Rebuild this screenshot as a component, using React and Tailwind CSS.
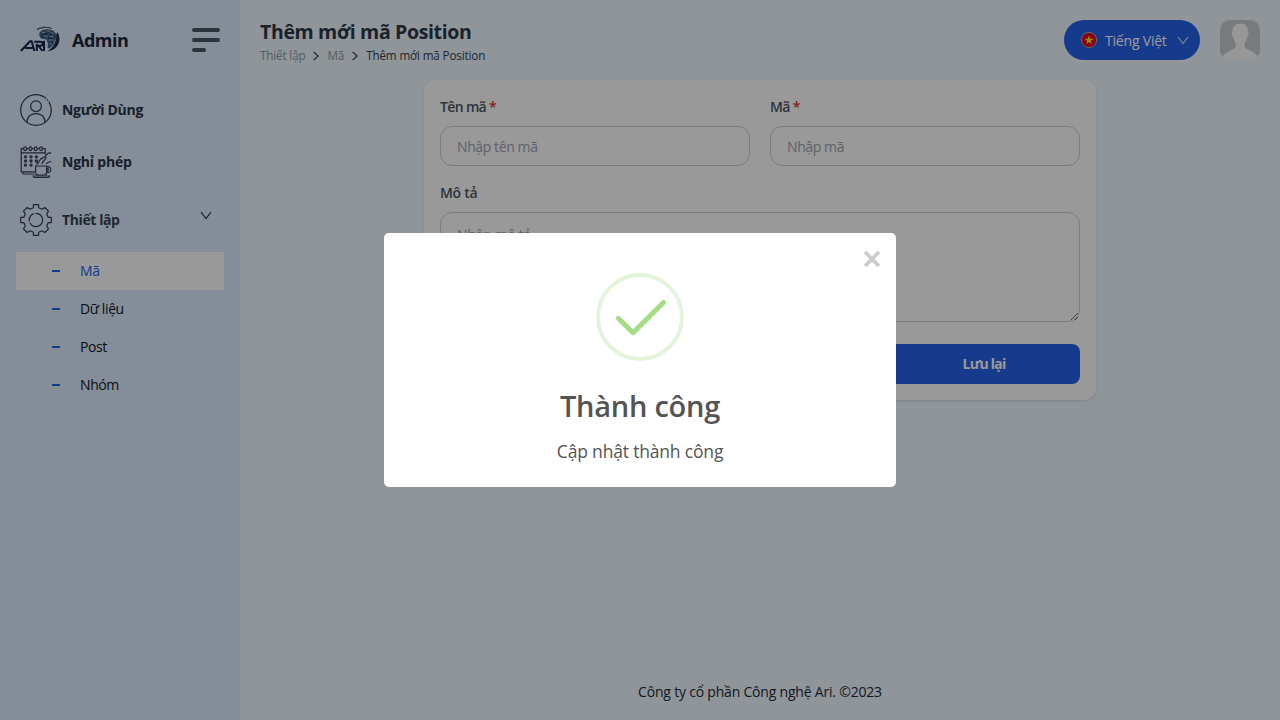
function Logo() {
  return (
    <svg width="40" height="28" viewBox="0 0 40 28" fill="none" className="shrink-0">
      <path d="M17 3.5C20.5 1.2 27 .4 31.5 2.6" stroke="#3a5072" strokeWidth="1.1" />
      <path d="M37.5 6C41.6 13 39.5 23.5 27.5 25.6C33.5 21.5 36.5 16 35.6 10Z" fill="#1b2b52" />
      <path d="M19.6 6.2L23 3.8L28 3L33 4.4L36.4 8L36.8 11.4L34.4 15L33.6 18.6L29.6 22.6L27.6 22L28 17.4L26.4 13.4L21 12.6L19.2 9.6Z" fill="#47627f" />
      <path d="M22 6.5h3M27 5h3M31.5 7h2M24 10h4M30 10.5h3M29 14h4M29.5 18h2" stroke="#7fc0cf" strokeWidth="1.2" />
      <path d="M23 8.2h5M28 12.2h4M21.5 11h2M31 16h2M30 8.5h2" stroke="#1d2f55" strokeWidth="1.1" />
      <path d="M.8 25L10 15.2h1.6L14.4 25M5 22h7.5" stroke="#17264b" strokeWidth="2" />
      <path d="M14.2 15.7h6.4c2.8 0 2.8 4 0 4h-3.8M16.8 17.8V25M18.6 20l3.8 5M24 14.8V25" stroke="#17264b" strokeWidth="2" />
    </svg>
  );
}

function UserIcon() {
  return (
    <svg width="32" height="32" viewBox="0 0 32 32" fill="none" stroke="#374151" strokeWidth="1.25" className="shrink-0">
      <circle cx="16" cy="16" r="15.3" strokeDasharray="82.5 1.3 1.5 1.3 9.6 0" />
      <circle cx="16" cy="12.2" r="5.4" />
      <path d="M7.2 28.4v-1.2c0-10 17.6-10 17.6 0v1.2" />
    </svg>
  );
}

function LeaveIcon() {
  return (
    <svg width="32" height="32" viewBox="0 0 32 32" fill="none" stroke="#374151" strokeWidth="1.2" className="shrink-0">
      <path d="M3.6 2.7H1.2v23.2h13.6M6.7 2.7h1.7M12 2.7h1.6M17.2 2.7h1.6M22.4 2.7h2.8v5.8M1.2 6.8h24M3 26v2h11.5" />
      <rect x="3.8" y=".8" width="2.7" height="3.8" rx="1.3" />
      <rect x="9.1" y=".8" width="2.7" height="3.8" rx="1.3" />
      <rect x="14.4" y=".8" width="2.7" height="3.8" rx="1.3" />
      <rect x="19.7" y=".8" width="2.7" height="3.8" rx="1.3" />
      <g strokeWidth="1.3">
        <circle cx="5.5" cy="10.8" r="1" /><circle cx="11" cy="10.8" r="1" /><circle cx="16.4" cy="10.8" r="1" />
        <circle cx="5.5" cy="15" r="1" /><circle cx="11" cy="15" r="1" /><circle cx="16.4" cy="15" r="1" />
        <circle cx="5.5" cy="19.2" r="1" /><circle cx="11" cy="19.2" r="1" />
      </g>
      <path d="M31.3 7c-4-.4-4.6 1.2-5.6 3s-5.2 1.6-6.2 4.800-2.500 1.600-2.700 4M31.300 15.800c-3.600-.4-3.600 1.400-5.300 2M26 11c.2 3-3.400 3.200-4 6.800" />
      <path d="M15.6 20h11v6.2c0 1.8-1 2.8-2.8 2.800h-5.400c-1.800 0-2.800-1-2.800-2.800ZM26.600 20.700c5.600-1.400 5.600 6.800 0 6M26.600 22.700c2.400-.8 2.400 2.800 0 2.300" />
      <path d="M13.2 30h16.4c0 .9-.6 1.5-1.5 1.5H14.7c-.9 0-1.5-.6-1.5-1.5Z" />
    </svg>
  );
}

function GearIcon() {
  return (
    <svg width="32" height="32" viewBox="0 0 32 32" fill="none" stroke="#374151" strokeWidth="1.2" strokeLinejoin="round" className="shrink-0">
      <path d="M13.4.7h5.2v3.1l3.6 1.5 2.6-1.8 3.7 3.7-1.8 2.6 1.500 3.600h3.100v5.200h-3.100l-1.500 3.600 1.800 2.600-3.700 3.700-2.600-1.800-3.600 1.500v3.100h-5.200v-3.100l-3.600-1.500-2.600 1.800-3.700-3.700 1.800-2.600-1.500-3.600H.7v-5.200h3.100l1.500-3.600-1.800-2.600 3.700-3.700 2.600 1.800 3.600-1.500Z" />
      <circle cx="16" cy="16" r="6.7" strokeDasharray="18 1.5 10 1.5" />
    </svg>
  );
}

function Chevron({ className, d = 'M1 1l5 6.5L11 1', w = 12, h = 9 }) {
  return (
    <svg width={w} height={h} viewBox={`0 0 ${w} ${h}`} fill="none" stroke="currentColor" strokeWidth="1.2" className={className}>
      <path d={d} />
    </svg>
  );
}

function MenuIcon() {
  return (
    <div className="flex w-7 flex-col gap-1.5">
      <span className="h-1 rounded-full bg-[#485563]" />
      <span className="h-1 rounded-full bg-[#485563]" />
      <span className="h-1 w-3.5 rounded-full bg-[#485563]" />
    </div>
  );
}

function Flag() {
  return (
    <svg width="16" height="16" viewBox="0 0 16 16" className="shrink-0">
      <circle cx="8" cy="8" r="7.6" fill="#e6000f" stroke="#b9c2dc" strokeWidth=".8" />
      <path d="M8 3.2l1.2 3.5h3.5L9.9 8.8l1 3.4L8 10.1l-2.9 2.1 1-3.4-2.8-2.1h3.5Z" fill="#ffea00" />
    </svg>
  );
}

function Avatar() {
  return (
    <svg width="40" height="40" viewBox="0 0 40 40" className="rounded-[10px]">
      <rect width="40" height="40" fill="#c9cccf" />
      <path d="M20.5 3.4c5.3 0 7.7 3.2 7.4 8.6 1.2.5.6 4.3-.7 4.9-.4 2.6-1.3 4.3-2.4 5.6v4.2c.5 3.4 13 4.3 14.2 13.3H1.6c1-9 13.6-9.9 14-13.3v-4.2c-1.2-1.3-2-3-2.4-5.6-1.3-.6-1.900-4.400-.7-4.900-.2-5.600 2.600-8.600 8-8.600Z" fill="#fcfcfc" />
    </svg>
  );
}

const SUBITEMS = ['Mã', 'Dữ liệu', 'Post', 'Nhóm'];

function Sidebar() {
  return (
    <aside className="flex w-60 shrink-0 flex-col bg-[#deebff]">
      <div className="flex h-20 items-center px-5">
        <Logo />
        <span className="ml-3 text-lg font-bold tracking-[-0.5px] text-[#1f2937]">Admin</span>
        <div className="ml-auto"><MenuIcon /></div>
      </div>
      <nav className="flex flex-col px-4 pt-1 text-sm text-[#2b3444]">
        <div className="flex h-[52px] items-center gap-2.5 px-1 font-bold tracking-[-0.3px]"><UserIcon />Người Dùng</div>
        <div className="flex h-[52px] items-center gap-2.5 px-1 font-bold tracking-[-0.22px]"><LeaveIcon />Nghỉ phép</div>
        <div className="flex h-16 items-center gap-2.5 px-1 font-bold tracking-[-0.4px] text-[#374151]">
          <GearIcon />Thiết lập
          <Chevron className="mr-2 mb-2.5 ml-auto text-[#1f2937]" />
        </div>
        {SUBITEMS.map((label, i) => (
          <div
            key={label}
            className={`flex h-[38px] items-center gap-5 pl-9 tracking-[-0.4px] ${i === 0 ? 'bg-white text-[#2563eb]' : 'text-[#111827]'}`}
          >
            <span className="h-0.5 w-2 bg-[#2563eb]" />
            {label}
          </div>
        ))}
      </nav>
    </aside>
  );
}

function Header() {
  return (
    <header className="flex h-20 items-center justify-between px-5">
      <div className="flex flex-col pt-2">
        <h1 className="text-[19.5px] leading-6 font-bold tracking-[-0.35px] text-[#2d3748]">Thêm mới mã Position</h1>
        <div className="flex h-6 items-center text-[11.7px] tracking-[-0.16px] text-[#9299a5]">
          <span>Thiết lập</span>
          <Chevron w={6} h={10} d="M.7 1l4.5 4L.7 9" className="mr-2 ml-2 text-[#374151]" />
          <span>Mã</span>
          <Chevron w={6} h={10} d="M.7 1l4.5 4L.7 9" className="mr-2 ml-2 text-[#374151]" />
          <span className="text-[#374151]">Thêm mới mã Position</span>
        </div>
      </div>
      <div className="flex items-center gap-5">
        <div className="flex h-10 w-[136px] items-center rounded-full bg-[#2563eb] pl-[17px] text-white">
          <Flag />
          <span className="ml-2 pt-0.5 text-sm tracking-[-0.2px]">Tiếng Việt</span>
          <Chevron className="ml-2.5 text-[#dbe3f5]" />
        </div>
        <Avatar />
      </div>
    </header>
  );
}

function Field({ label, required, placeholder }) {
  return (
    <label className="flex flex-1 flex-col gap-2">
      <span className="flex h-[22px] items-center gap-[3px] text-sm font-semibold tracking-[-0.65px] text-[#4b5563]">
        {label}
        {required && <span className="text-[#ef2b2b]">*</span>}
      </span>
      <input
        className="h-10 w-full rounded-xl border border-[#d1d1d1] px-4 text-sm tracking-[-0.4px] placeholder:text-[#9ca3af]"
        placeholder={placeholder}
      />
    </label>
  );
}

function CodeForm() {
  return (
    <form className="mx-auto flex h-80 w-[672px] flex-col rounded-xl bg-white px-4 pt-4 shadow-sm">
      <div className="flex gap-5">
        <Field label="Tên mã" required placeholder="Nhập tên mã" />
        <Field label="Mã" required placeholder="Nhập mã" />
      </div>
      <label className="mt-4 flex flex-col gap-2">
        <span className="flex h-[22px] items-center text-sm font-semibold tracking-[-0.3px] text-[#4b5563]">Mô tả</span>
        <textarea
          className="h-[110px] w-full rounded-xl border border-[#d1d1d1] px-4 py-3 text-sm tracking-[-0.3px] placeholder:text-[#9ca3af]"
          placeholder="Nhập mô tả"
        />
      </label>
      <div className="mt-[22px] flex justify-end">
        <button type="button" className="h-10 w-[192px] rounded-lg bg-[#2563eb] text-sm font-bold tracking-[-0.8px] text-white">Lưu lại</button>
      </div>
    </form>
  );
}

function SuccessDialog() {
  return (
    <div className="fixed inset-0 flex items-center justify-center bg-black/40">
      <div role="dialog" className="relative flex h-[254px] w-lg flex-col items-center rounded-[5px] bg-white pt-10">
        <button type="button" aria-label="Đóng" className="absolute top-[18px] right-4 text-[#cccccc]">
          <svg width="16" height="16" viewBox="0 0 16 16" stroke="currentColor" strokeWidth="3.6">
            <path d="M1 1l14 14M15 1L1 15" />
          </svg>
        </button>
        <svg width="88" height="88" viewBox="0 0 88 88" fill="none">
          <circle cx="44" cy="44" r="42" stroke="#e4f4da" strokeWidth="4" />
          <path d="M22.3 45.3L37 59.7L67.5 29.5" stroke="#a5dc86" strokeWidth="5" strokeLinecap="round" strokeLinejoin="round" />
        </svg>
        <h2 className="mt-[27px] text-[29px] leading-9 font-semibold tracking-[-0.25px] text-[#545454]">Thành công</h2>
        <p className="mt-[13px] text-[17.5px] leading-7 tracking-[-0.18px] text-[#545454]">Cập nhật thành công</p>
      </div>
    </div>
  );
}

export default function App() {
  return (
    <div className="flex h-screen overflow-hidden bg-[#eff8ff] font-['Open_Sans','Noto_Sans',sans-serif]">
      <Sidebar />
      <main className="flex flex-1 flex-col">
        <Header />
        <CodeForm />
        <footer className="mt-auto flex h-14 items-center justify-center text-sm tracking-[-0.2px] text-[#1f2937]">
          Công ty cổ phần Công nghệ Ari. ©2023
        </footer>
      </main>
      <SuccessDialog />
    </div>
  );
}
